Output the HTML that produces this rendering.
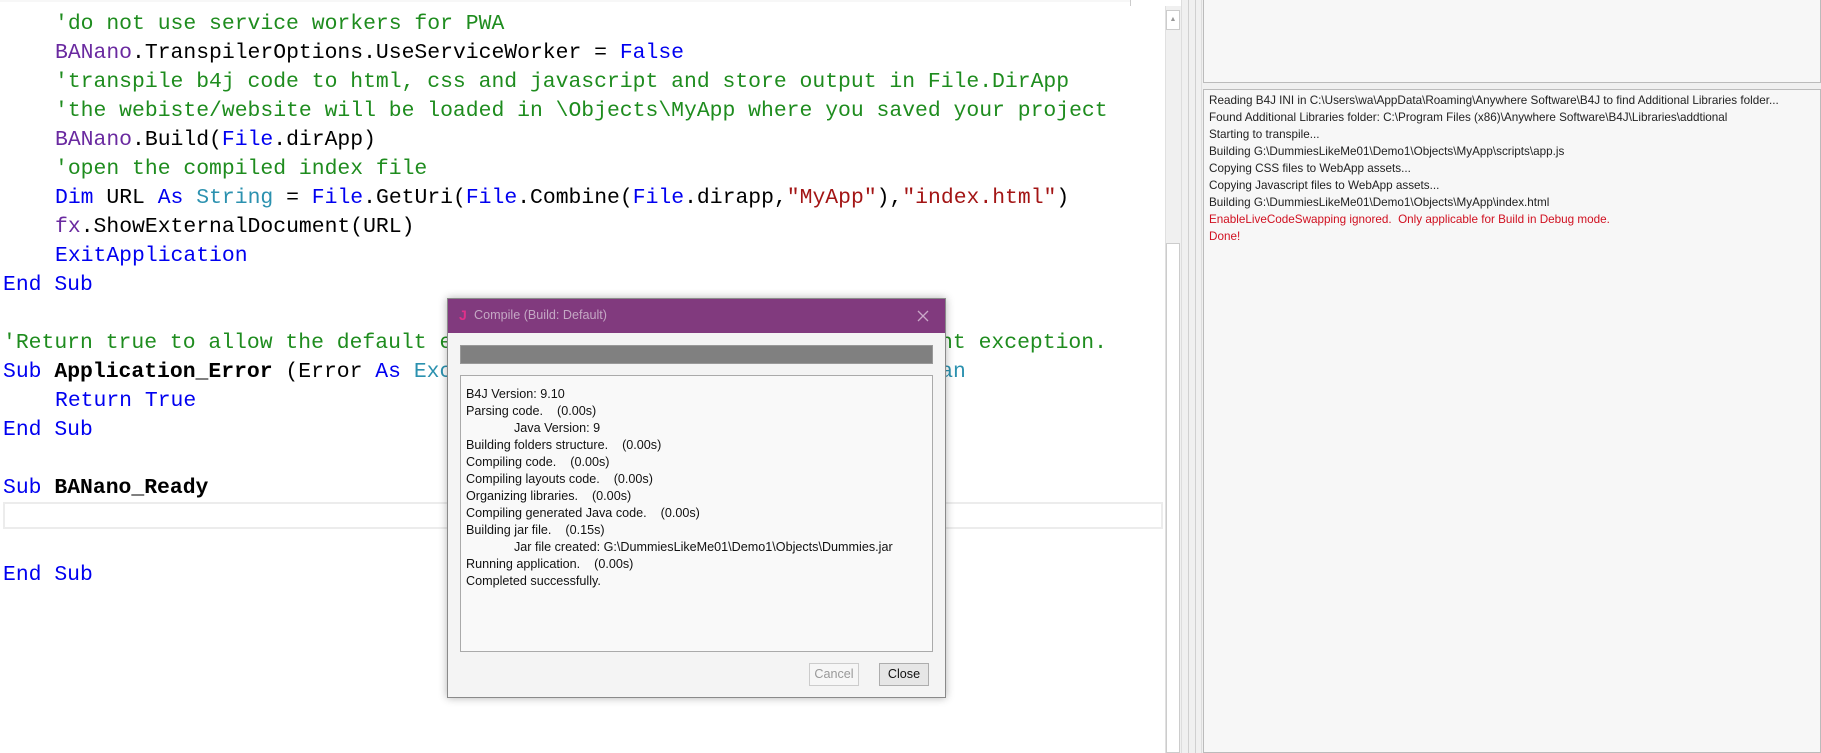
<!DOCTYPE html>
<html><head><meta charset="utf-8"><style>
*{margin:0;padding:0;box-sizing:border-box}
body{width:1821px;height:753px;overflow:hidden;background:#fff;position:relative;font-family:"Liberation Sans",sans-serif}
.code{position:absolute;left:0;top:2px;width:1165px;height:751px;background:#fff}
.ln{position:absolute;left:3px;font-family:"Liberation Mono",monospace;font-size:21.4px;line-height:29px;white-space:pre;color:#000}
.g{color:#1e8c1e}.p{color:#6a2aa0}.b{color:#0000f0}.t{color:#2b91af}.r{color:#a31515}.k{font-weight:bold}
.dlg{position:absolute;left:447px;top:298px;width:499px;height:400px;background:#f4f4f4;border:1px solid #8a8a8a;box-shadow:0 0 8px rgba(0,0,0,.3)}
.tb{height:34px;background:#813a7e;position:relative}
.dl{position:absolute;font-size:12.6px;line-height:17px;white-space:pre;color:#111}
.log{position:absolute;font-size:11.7px;line-height:17px;white-space:pre;color:#222;left:1209px}
</style></head><body>
<div style="position:absolute;left:0;top:0;width:1130px;height:6px;border-bottom:2px solid #c8c8c8;background:#f7f7f7"></div>
<div class="code">
<div class="ln g" style="top:8px;left:55px">'do not use service workers for PWA</div>
<div class="ln" style="top:37px;left:55px"><span class="p">BANano</span>.TranspilerOptions.UseServiceWorker = <span class="b">False</span></div>
<div class="ln g" style="top:66px;left:55px">'transpile b4j code to html, css and javascript and store output in File.DirApp</div>
<div class="ln g" style="top:95px;left:55px">'the webiste/website will be loaded in \Objects\MyApp where you saved your project</div>
<div class="ln" style="top:124px;left:55px"><span class="p">BANano</span>.Build(<span class="b">File</span>.dirApp)</div>
<div class="ln g" style="top:153px;left:55px">'open the compiled index file</div>
<div class="ln" style="top:182px;left:55px"><span class="b">Dim</span> URL <span class="b">As</span> <span class="t">String</span> = <span class="b">File</span>.GetUri(<span class="b">File</span>.Combine(<span class="b">File</span>.dirapp,<span class="r">"MyApp"</span>),<span class="r">"index.html"</span>)</div>
<div class="ln" style="top:211px;left:55px"><span class="p">fx</span>.ShowExternalDocument(URL)</div>
<div class="ln b" style="top:240px;left:55px">ExitApplication</div>
<div class="ln b" style="top:269px">End Sub</div>
<div class="ln g" style="top:327px">'Return true to allow the default exceptions handler to handle the uncaught exception.</div>
<div class="ln" style="top:356px"><span class="b">Sub</span> <span class="k">Application_Error</span> (Error <span class="b">As</span> <span class="t">Exception</span>, StackTrace <span class="b">As</span> <span class="t">String</span>) <span class="b">As</span> <span class="t">Boolean</span></div>
<div class="ln b" style="top:385px;left:55px">Return True</div>
<div class="ln b" style="top:414px">End Sub</div>
<div class="ln" style="top:472px"><span class="b">Sub</span> <span class="k">BANano_Ready</span></div>
<div style="position:absolute;left:3px;top:500px;width:1160px;height:27px;border:2px solid #ececec"></div>
<div class="ln b" style="top:559px">End Sub</div>
</div>
<div style="position:absolute;left:1165px;top:6px;width:16px;height:747px;background:#f0f0f0;border-left:1px solid #e0e0e0"></div>
<div style="position:absolute;left:1166px;top:10px;width:14px;height:20px;background:#fff;border:1px solid #ccc;font-size:7px;color:#999;text-align:center;line-height:18px">▲</div>
<div style="position:absolute;left:1166px;top:243px;width:14px;height:510px;background:#fff;border:1px solid #ccc"></div>
<div style="position:absolute;left:1130px;top:0;width:1px;height:6px;background:#ccc"></div>
<div style="position:absolute;left:1181px;top:0;width:21px;height:753px;background:#f0f0f0;border-left:1px solid #ddd;border-right:1px solid #ddd"></div>
<div style="position:absolute;left:1188px;top:0;width:1px;height:753px;background:#d0d0d0"></div>
<div style="position:absolute;left:1195px;top:0;width:1px;height:753px;background:#d0d0d0"></div>
<div style="position:absolute;left:1202px;top:0;width:619px;height:753px;background:#f0f0f0"></div>
<div style="position:absolute;left:1203px;top:-2px;width:618px;height:85px;background:#f7f7f7;border:1px solid #bbb"></div>
<div style="position:absolute;left:1203px;top:89px;width:618px;height:664px;background:#f7f7f7;border:1px solid #bbb"></div>
<div class="log" style="top:92px">Reading B4J INI in C:\Users\wa\AppData\Roaming\Anywhere Software\B4J to find Additional Libraries folder...</div>
<div class="log" style="top:109px">Found Additional Libraries folder: C:\Program Files (x86)\Anywhere Software\B4J\Libraries\addtional</div>
<div class="log" style="top:126px">Starting to transpile...</div>
<div class="log" style="top:143px">Building G:\DummiesLikeMe01\Demo1\Objects\MyApp\scripts\app.js</div>
<div class="log" style="top:160px">Copying CSS files to WebApp assets...</div>
<div class="log" style="top:177px">Copying Javascript files to WebApp assets...</div>
<div class="log" style="top:194px">Building G:\DummiesLikeMe01\Demo1\Objects\MyApp\index.html</div>
<div class="log" style="top:211px;color:#d01020">EnableLiveCodeSwapping ignored.  Only applicable for Build in Debug mode.</div>
<div class="log" style="top:228px;color:#d01020">Done!</div>

<div class="dlg">
<div class="tb">
<span style="position:absolute;left:11px;top:8px;color:#e0308a;font-weight:bold;font-size:14px">J</span>
<span style="position:absolute;left:26px;top:9px;color:#c4a8c4;font-size:12.6px">Compile (Build: Default)</span>
<svg style="position:absolute;left:469px;top:11px" width="12" height="12"><path d="M1 1L11 11M11 1L1 11" stroke="#c9a8c8" stroke-width="1.3"/></svg>
</div>
<div style="position:absolute;left:12px;top:46px;width:473px;height:19px;background:#808080;border:1px solid #999"></div>
<div style="position:absolute;left:12px;top:76px;width:473px;height:277px;background:#f9f9f9;border:1px solid #aaa"></div>
<div class="dl" style="left:18px;top:87px">B4J Version: 9.10</div>
<div class="dl" style="left:18px;top:104px">Parsing code.    (0.00s)</div>
<div class="dl" style="left:66px;top:121px">Java Version: 9</div>
<div class="dl" style="left:18px;top:138px">Building folders structure.    (0.00s)</div>
<div class="dl" style="left:18px;top:155px">Compiling code.    (0.00s)</div>
<div class="dl" style="left:18px;top:172px">Compiling layouts code.    (0.00s)</div>
<div class="dl" style="left:18px;top:189px">Organizing libraries.    (0.00s)</div>
<div class="dl" style="left:18px;top:206px">Compiling generated Java code.    (0.00s)</div>
<div class="dl" style="left:18px;top:223px">Building jar file.    (0.15s)</div>
<div class="dl" style="left:66px;top:240px">Jar file created: G:\DummiesLikeMe01\Demo1\Objects\Dummies.jar</div>
<div class="dl" style="left:18px;top:257px">Running application.    (0.00s)</div>
<div class="dl" style="left:18px;top:274px">Completed successfully.</div>
<div style="position:absolute;left:361px;top:364px;width:50px;height:23px;border:1px solid #ccc;background:#f6f6f6;color:#999;font-size:12.6px;text-align:center;line-height:21px">Cancel</div>
<div style="position:absolute;left:431px;top:364px;width:50px;height:23px;border:1px solid #adadad;background:#e6e6e6;color:#111;font-size:12.6px;text-align:center;line-height:21px">Close</div>
</div>
</body></html>
